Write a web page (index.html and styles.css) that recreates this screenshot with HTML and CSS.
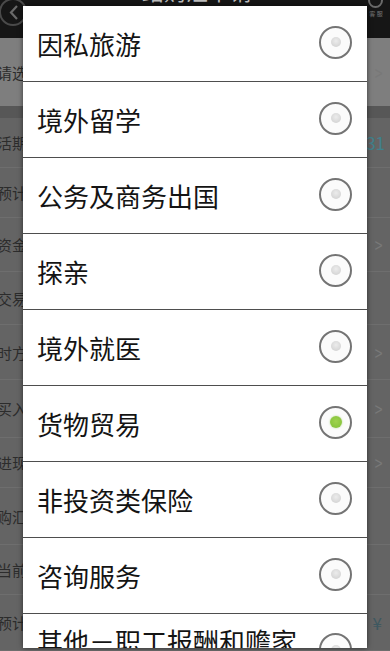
FILE: index.html
```html
<!DOCTYPE html>
<html lang="zh-CN">
<head>
    <meta charset="UTF-8">
    <meta name="viewport" content="width=device-width, initial-scale=1.0">
    <title>购汇用途</title>
    <link rel="stylesheet" href="styles.css">
</head>
<body>
    <div class="screen">
        <header class="topbar">
            <svg class="back" width="30" height="30" viewBox="0 0 30 30">
                <circle cx="13" cy="12" r="13" fill="none" stroke="#4a4a4a" stroke-width="2"/>
                <path d="M17 6 L11 12.5 L17 19" fill="none" stroke="#6a6a6a" stroke-width="2.2"/>
            </svg>
            <div class="title">结购汇申请</div>
            <div class="service">
                <span class="service-dot"></span>
                <span class="service-text">客 服</span>
            </div>
        </header>

        <!-- 底层页面（被遮罩压暗） -->
        <main class="page">
            <div class="row row-head" style="height:68px"><span>请选择</span><i class="arrow">&gt;</i></div>
            <div class="band"></div>
            <div class="row" style="height:50px"><span>活期账户</span><b class="num">31</b></div>
            <div class="row" style="height:50px"><span>预计金额</span></div>
            <div class="row" style="height:54px"><span>资金来源</span><i class="arrow">&gt;</i></div>
            <div class="row" style="height:53px"><span>交易编码</span></div>
            <div class="row" style="height:55px"><span>时方国家</span><i class="arrow">&gt;</i></div>
            <div class="row" style="height:58px"><span>买入币种</span><i class="arrow">&gt;</i></div>
            <div class="row" style="height:50px"><span>进现方式</span><i class="arrow">&gt;</i></div>
            <div class="row" style="height:57px"><span>购汇金额</span></div>
            <div class="row" style="height:50px"><span>当前汇率</span></div>
            <div class="row" style="height:56px"><span>预计金额</span><b class="yen">¥</b></div>
        </main>

        <div class="dialog">
            <ul class="options">
                <li class="option"><span>因私旅游</span><i class="radio"></i></li>
                <li class="option"><span>境外留学</span><i class="radio"></i></li>
                <li class="option"><span>公务及商务出国</span><i class="radio"></i></li>
                <li class="option"><span>探亲</span><i class="radio"></i></li>
                <li class="option"><span>境外就医</span><i class="radio"></i></li>
                <li class="option"><span>货物贸易</span><i class="radio checked"></i></li>
                <li class="option"><span>非投资类保险</span><i class="radio"></i></li>
                <li class="option"><span>咨询服务</span><i class="radio"></i></li>
                <li class="option option-long"><span>其他－职工报酬和赡家款</span><i class="radio"></i></li>
            </ul>
        </div>
    </div>
</body>
</html>
```

FILE: styles.css
```css
* {
    box-sizing: border-box;
}

body {
    margin: 0;
    background: #5c5c5c;
    font-family: "Noto Sans CJK SC", "Noto Sans", sans-serif;
}

.screen {
    position: relative;
    width: 390px;
    height: 651px;
    overflow: hidden;
    background: #626262;
}

.topbar {
    height: 38px;
    background: #161616;
    display: flex;
    justify-content: space-between;
    align-items: flex-start;
}

.back {
    display: block;
}

.title {
    color: #bdbdbd;
    font-size: 22px;
    line-height: 22px;
    margin-top: -21px;
}

.service {
    width: 24px;
    display: flex;
    flex-direction: column;
    align-items: center;
    margin-right: 2px;
}

.service-dot {
    width: 15px;
    height: 15px;
    margin-top: -7px;
    border-radius: 50%;
    border: 2px solid #6a6a6a;
}

.service-text {
    color: #777;
    font-size: 6px;
    line-height: 8px;
    margin-top: 2px;
}

.page {
    display: flex;
    flex-direction: column;
}

.row {
    display: flex;
    justify-content: space-between;
    align-items: center;
    border-bottom: 1px solid #6e6e6e;
    color: #2c2c2c;
    font-size: 15px;
    margin-left: -3px;
    padding-right: 6px;
    background: #646464;
}

.row-head {
    background: #7e7e7e;
    border-bottom: none;
}

.band {
    height: 12px;
    background: #575757;
}

.arrow {
    font-style: normal;
    color: #787878;
    font-size: 20px;
    transform: scaleX(0.7);
}

.num {
    font-weight: normal;
    color: #41818c;
    font-size: 17px;
    margin-right: -1px;
}

.yen {
    font-weight: normal;
    color: #3e5860;
    font-size: 17px;
    margin-right: 2px;
}

.dialog {
    position: absolute;
    left: 23px;
    top: 6px;
    width: 344px;
    height: 642px;
    background: #ffffff;
    overflow: hidden;
    box-shadow: 0 0 5px rgba(0, 0, 0, 0.55);
}

.options {
    list-style: none;
    margin: 0;
    padding: 0;
}

.option {
    height: 76px;
    display: flex;
    justify-content: space-between;
    align-items: center;
    gap: 8px;
    padding: 0 15px 0 14px;
    border-bottom: 1px solid #4e4e4e;
    color: #141414;
    font-size: 26px;
}

.option-long {
    align-items: flex-start;
}

.option-long span {
    width: 262px;
    line-height: 34px;
    padding-top: 10px;
}

.option-long .radio {
    margin-top: 19px;
}

.radio {
    flex-shrink: 0;
    width: 33px;
    height: 33px;
    border-radius: 50%;
    border: 2px solid #747474;
    background: #fbfbfb;
    display: flex;
    align-items: center;
    justify-content: center;
    margin-top: -3px;
}

.radio::after {
    content: "";
    width: 10px;
    height: 10px;
    border-radius: 50%;
    background: radial-gradient(circle at 50% 40%, #ececec 0%, #cdcdcd 100%);
}

.radio.checked::after {
    width: 12px;
    height: 12px;
    background: radial-gradient(circle at 50% 45%, #9fd34e 0%, #7fbf36 100%);
    box-shadow: 0 0 2px rgba(130, 190, 60, 0.6);
}
```
